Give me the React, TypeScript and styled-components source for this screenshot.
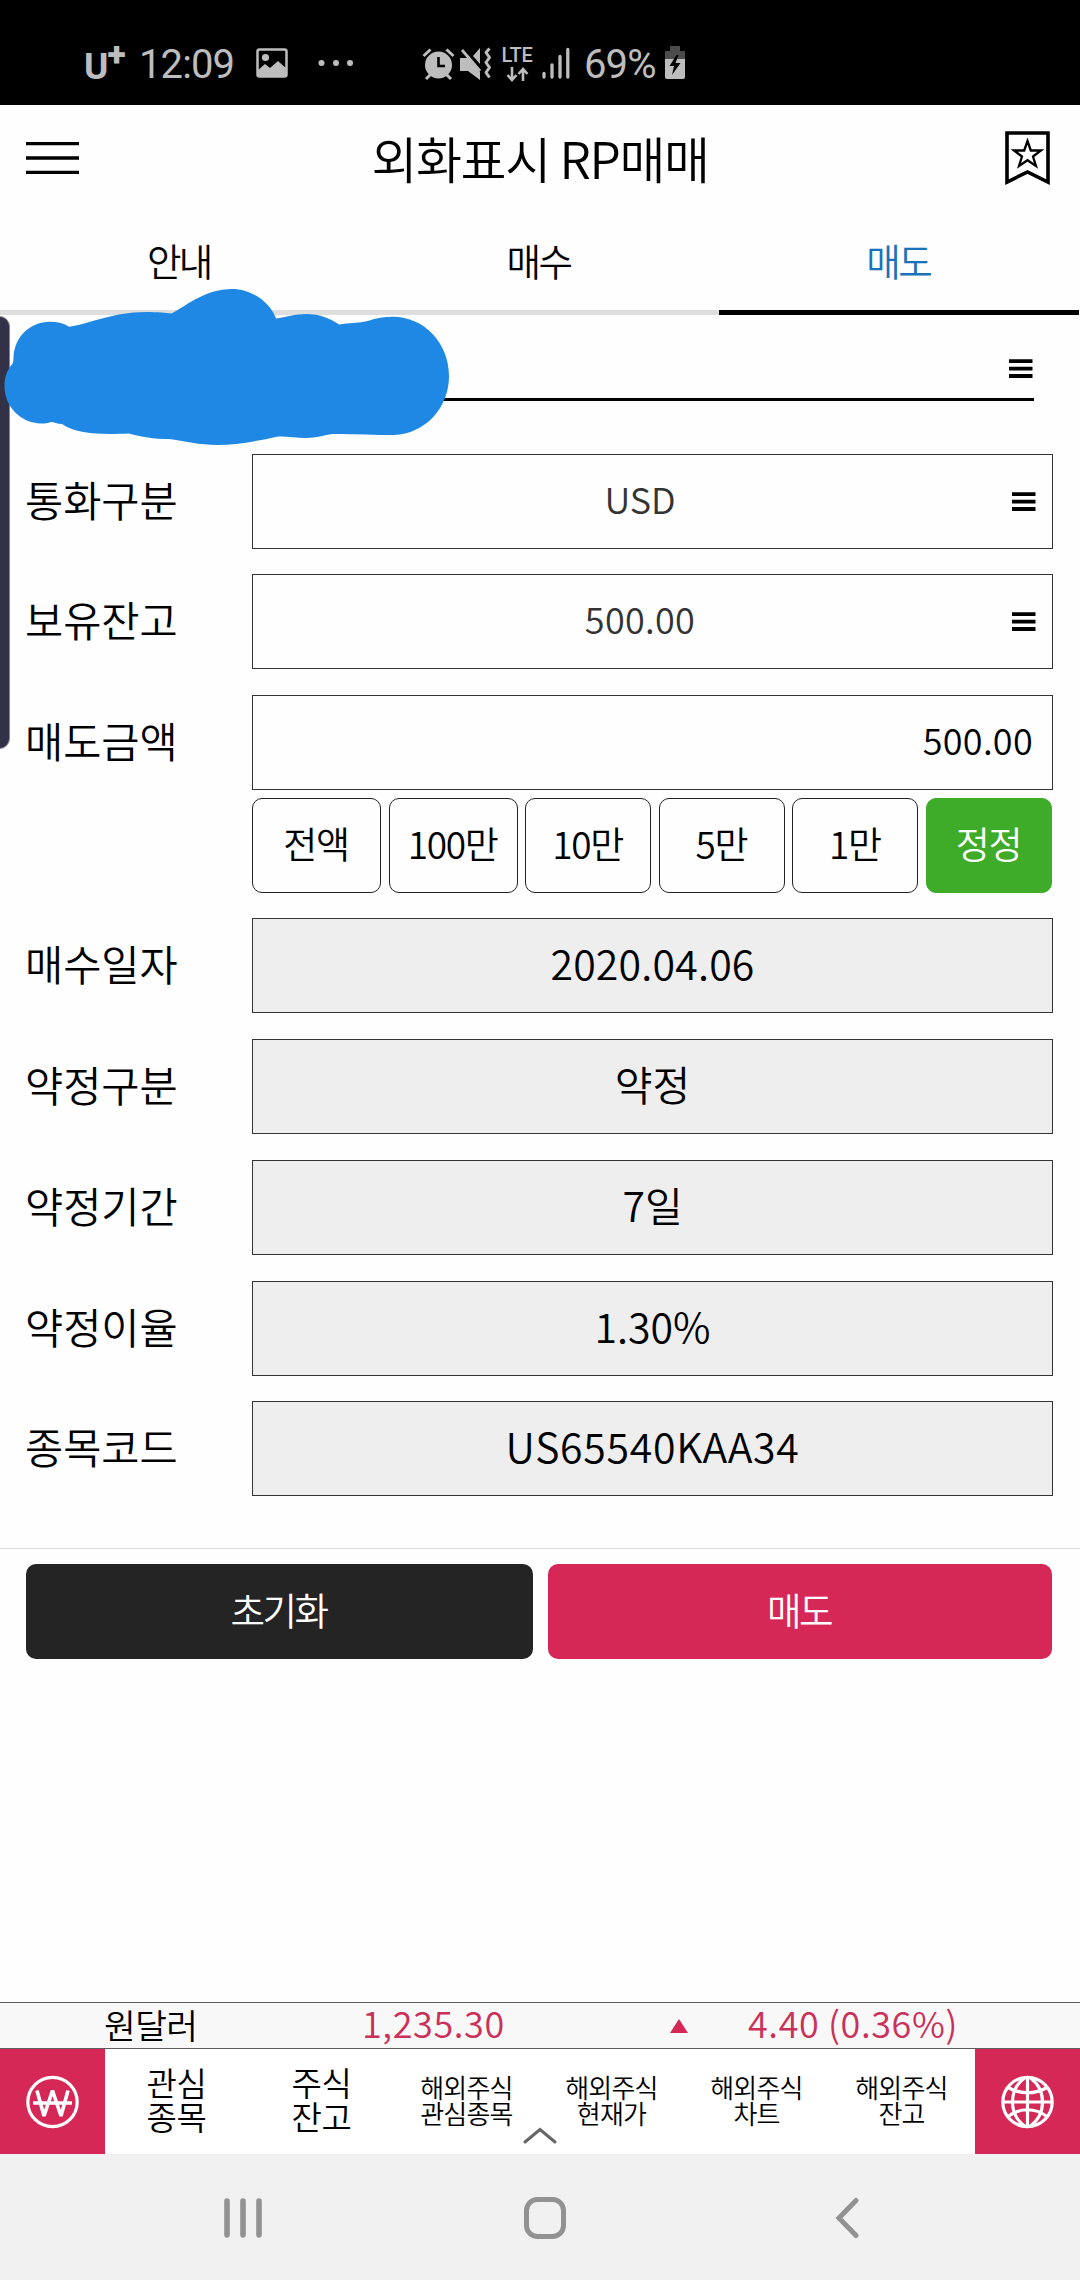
import React from 'react';
import styled, { createGlobalStyle } from 'styled-components';

const PINK = '#d52857';
const SYS = '#bdbdbd';

const GlobalStyle = createGlobalStyle`
  * { box-sizing: border-box; }
  body {
    margin: 0;
    background: #fefefe;
    color: #000;
    font-family: "Noto Sans CJK KR", "Noto Sans", sans-serif;
    font-weight: 350;
  }
  button { font: inherit; color: inherit; background: none; border: 0; padding: 0; margin: 0; }
  svg { display: block; flex: none; }
`;

const Screen = styled.div`
  position: relative;
  width: 1080px;
  height: 2280px;
  display: flex;
  flex-direction: column;
  overflow: hidden;
`;

const StatusBar = styled.header`
  height: 105px;
  flex: none;
  background: #000;
  color: ${SYS};
  display: flex;
  align-items: flex-start;
  padding: 43px 0 0 84px;
  font-family: Roboto, sans-serif;
  font-weight: 400;
  white-space: nowrap;
`;

const Slot = styled.div<{ $w: number; $ml?: number; $pt?: number }>`
  width: ${p => p.$w}px;
  height: 40px;
  margin-left: ${p => p.$ml ?? 0}px;
  padding-top: ${p => p.$pt ?? 0}px;
  flex: none;
`;

const StatusText = styled(Slot)`
  font-size: 40px;
  line-height: 43px;
  letter-spacing: -0.9px;
`;

const Carrier = styled(Slot)`
  display: flex;
  align-items: flex-start;
  font-size: 37px;
  font-weight: 700;
  line-height: 47px;
  b { font-size: 34px; line-height: 22px; margin-left: -1px; }
`;

const Lte = styled(Slot)`
  display: flex;
  flex-direction: column;
  align-items: center;
  font-size: 20px;
  font-weight: 500;
  line-height: 24px;
  letter-spacing: -0.3px;
`;

const TitleBar = styled.div`
  height: 106px;
  flex: none;
  display: flex;
  align-items: center;
  justify-content: space-between;
  padding: 0 29px 0 26px;
`;

const Title = styled.h1`
  margin: 0;
  font-size: 50px;
  font-weight: inherit;
  line-height: 60px;
  letter-spacing: -1.4px;
  padding: 0 4px 2px 0;
`;

const Tabs = styled.nav`
  height: 104px;
  flex: none;
  display: flex;
  padding-right: 1px;
`;

const Tab = styled.button<{ $active?: boolean }>`
  flex: 1;
  font-size: 37.5px;
  line-height: 90px;
  letter-spacing: -2.6px;
  padding: 0 2px 2px 0;
  color: ${p => (p.$active ? '#1a72b8' : '#000')};
  border-bottom: 5px solid ${p => (p.$active ? '#000' : '#dedede')};
`;

const AccountRow = styled.div`
  height: 86px;
  flex: none;
  margin: 0 46px 0 26px;
  border-bottom: 3px solid #000;
  display: flex;
  align-items: center;
  justify-content: flex-end;
  padding: 24px 1px 0 0;
`;

const Form = styled.div`
  display: flex;
  flex-direction: column;
  padding: 53px 27px 0 26px;
`;

const Row = styled.div<{ $gap?: number }>`
  display: flex;
  align-items: center;
  height: 95px;
  margin-top: ${p => p.$gap ?? 0}px;
`;

const Label = styled.label`
  width: 226px;
  flex: none;
  font-size: 41.5px;
  line-height: 88px;
  padding-bottom: 6px;
  text-indent: -1px;
`;

const Field = styled.div<{ $kind: 'select' | 'input' | 'readonly' }>`
  flex: 1;
  height: 95px;
  border: 1px solid #333;
  display: flex;
  align-items: center;
  background: ${p => (p.$kind === 'readonly' ? '#eee' : '#fefefe')};
  color: ${p => (p.$kind === 'select' ? '#333' : '#000')};
  font-size: ${p => (p.$kind === 'readonly' ? 41 : 36)}px;
  padding: ${p => (p.$kind === 'select' ? '1px 16px 0 15px' : p.$kind === 'input' ? '0 19px 0 0' : '0')};
`;

const Value = styled.span<{ $align: 'center' | 'right'; $track?: number }>`
  flex: 1;
  line-height: 80px;
  padding-bottom: 8px;
  text-align: ${p => p.$align};
  letter-spacing: ${p => p.$track ?? 0}px;
`;

const QuickRow = styled.div`
  display: grid;
  grid-template-columns: 129px 129px 126px 126px 126px 126px;
  justify-content: space-between;
  margin: 8px 1px 0 226px;
  height: 95px;
`;

const Quick = styled.button<{ $green?: boolean }>`
  border-radius: 10px;
  border: 1px solid ${p => (p.$green ? '#3eab29' : '#222')};
  background: ${p => (p.$green ? '#3eab29' : '#fefefe')};
  color: ${p => (p.$green ? '#fff' : '#000')};
  font-size: 37px;
  line-height: 80px;
  letter-spacing: -1.3px;
  padding: 0 1px 6px 0;
  white-space: nowrap;
`;

const Actions = styled.div`
  margin-top: 52px;
  border-top: 1px solid #dcdcdc;
  padding: 15px 28px 0 26px;
  display: grid;
  grid-template-columns: 507px 504px;
  justify-content: space-between;
`;

const Action = styled.button<{ $color: string }>`
  height: 95px;
  border-radius: 10px;
  background: ${p => p.$color};
  color: #fff;
  font-size: 37.5px;
  line-height: 80px;
  letter-spacing: -2.5px;
  padding: 0 2px 5px 0;
`;

const Spacer = styled.div`
  flex: 1;
`;

const Ticker = styled.div`
  height: 47px;
  flex: none;
  border: solid #5c5c5c;
  border-width: 1px 0;
  background: #f8f8f8;
  display: grid;
  grid-template-columns: 104px 258px 308px 78px 1fr;
  align-items: center;
  font-size: 36px;
  line-height: 38px;
  letter-spacing: 0.6px;
  color: #c9305a;
  white-space: nowrap;
`;

const Quote = styled.span`
  padding-bottom: 7px;
`;

const Pair = styled.span`
  color: #000;
  font-size: 34.5px;
  letter-spacing: -0.6px;
  padding-bottom: 4px;
`;

const BottomBar = styled.nav`
  position: relative;
  height: 105px;
  flex: none;
  display: grid;
  grid-template-columns: 105px repeat(6, 1fr) 105px;
  background: #fff;
`;

const Market = styled.button`
  background: ${PINK};
  display: flex;
  align-items: center;
  justify-content: center;
`;

const Shortcut = styled.button<{ $small?: boolean }>`
  display: flex;
  flex-direction: column;
  align-items: center;
  justify-content: center;
  padding-right: 2px;
  font-family: "Liberation Sans", "Noto Sans CJK KR", sans-serif;
  font-size: ${p => (p.$small ? 26 : 33)}px;
  line-height: ${p => (p.$small ? 26 : 34)}px;
  letter-spacing: ${p => (p.$small ? -0.8 : -0.3)}px;
`;

const Pull = styled.div`
  position: absolute;
  left: 522px;
  top: 77px;
`;

const SystemNav = styled.div`
  height: 126px;
  flex: none;
  background: #f1f1f1;
  display: grid;
  grid-template-columns: 300px 299px auto;
  align-items: center;
  padding: 2px 0 0 223px;
`;

const EdgeHandle = styled.div`
  position: absolute;
  left: -11px;
  top: 316px;
  width: 21px;
  height: 433px;
  border-radius: 11px;
  border: 1px solid #85838f;
  background: #333147;
`;

const Scribble = styled.svg`
  position: absolute;
  left: 0;
  top: 280px;
`;

const ListIcon = () => (
  <svg width="24" height="20" viewBox="0 0 24 20">
    <path d="M0 2.2h23.5M0 9.6h23.5M0 17h23.5" stroke="#000" strokeWidth="3.8" />
  </svg>
);

const MenuIcon = () => (
  <svg width="53" height="34" viewBox="0 0 53 34">
    <path d="M0 2.600h53M0 17h53M0 31.400h53" stroke="#000" strokeWidth="3.4" />
  </svg>
);

const BookmarkIcon = () => (
  <svg width="46" height="54" viewBox="0 0 46 54" fill="none" stroke="#000">
    <path d="M2 2h41v49L22.5 41 2 51z" strokeWidth="3.6" />
    <path d="M22.500 10l3.300 9.500h10.200l-8 6 3 9.500-8.500-5.800-8.500 5.800 3-9.500-8-6h10.200z" strokeWidth="2.300" />
  </svg>
);

const PictureIcon = () => (
  <svg width="32" height="32" viewBox="0 0 32 32">
    <rect x="1.5" y="2.5" width="29" height="27" rx="2" fill="none" stroke={SYS} strokeWidth="2.5" />
    <circle cx="9.5" cy="10.5" r="3.6" fill={SYS} />
    <path d="M1 24l8-7 5 4 8-7 9 8v8H1z" fill={SYS} />
  </svg>
);

const DotsIcon = () => (
  <svg width="36" height="8" viewBox="0 0 36 8" fill={SYS}>
    <circle cx="3.5" cy="4" r="3" />
    <circle cx="18" cy="4" r="3" />
    <circle cx="32" cy="4" r="3" />
  </svg>
);

const AlarmIcon = () => (
  <svg width="33" height="34" viewBox="0 0 33 34" fill="none" stroke={SYS}>
    <circle cx="16.5" cy="18" r="13.5" fill={SYS} stroke="none" />
    <path d="M1.5 9l7-6.5M31.5 9l-7-6.5M4 32l5-5M29 32l-5-5" strokeWidth="3" />
    <path d="M16.5 10v9H23" stroke="#000" strokeWidth="2.6" />
  </svg>
);

const MuteIcon = () => (
  <svg width="32" height="34" viewBox="0 0 32 34">
    <path d="M0 11h8l12 14v8L8 24H0zM13 9l7-8v16z" fill={SYS} />
    <path d="M2 3l18 21" stroke={SYS} strokeWidth="2.800" />
    <path d="M29.500 1.500l-3.500 4 3.500 5-3.500 5 3.500 5-3.500 5 3.500 5" fill="none" stroke={SYS} strokeWidth="3" strokeLinejoin="round" />
  </svg>
);

const DataIcon = () => (
  <svg width="23" height="15" viewBox="0 0 23 15" fill="none" stroke={SYS} strokeWidth="2.6">
    <path d="M6 0v12M1.5 8L6 13l4.500-5M17 14V3M12.500 7L17 2l4.500 5" />
  </svg>
);

const SignalIcon = () => (
  <svg width="28" height="33" viewBox="0 0 28 33" stroke={SYS} strokeWidth="3.3" strokeLinecap="round">
    <path d="M2 26.500V30M10 18v12M18 9.500V30M25.800 2.500V30" />
  </svg>
);

const BatteryIcon = () => (
  <svg width="22" height="34" viewBox="0 0 22 34">
    <path d="M6 0h10v5h5v9H1V5h5z" fill="#4b4b4b" />
    <path d="M1 13h20v18a2 2 0 0 1-2 2H3a2 2 0 0 1-2-2z" fill={SYS} />
    <path d="M12.500 9L5.500 20h4.500l-2 9 8.500-12h-5l3-8z" fill="#000" />
  </svg>
);

const WonIcon = () => (
  <svg width="54" height="54" viewBox="0 0 54 54" fill="none" stroke="#fff">
    <circle cx="26.500" cy="27" r="24.700" strokeWidth="3.200" />
    <path d="M11 15.500l7 25.500 8.500-25.500L35 41l7-25.500M7 28h39" strokeWidth="3.600" strokeLinejoin="bevel" />
  </svg>
);

const GlobeIcon = () => (
  <svg width="54" height="54" viewBox="0 0 54 54" fill="none" stroke="#fff" strokeWidth="3.200">
    <circle cx="26.500" cy="27" r="24.700" />
    <path d="M26.500 2v50M2 27h50M23.500 3C7.500 15 7.500 39 23.500 51M29.500 3c16 12 16 36 0 48M7 12.500c12 7 27 7 39 0M7 41.500c12-9 27-9 39 0" />
  </svg>
);

const shortcuts: { lines: string[]; small?: boolean }[] = [
  { lines: ['관심', '종목'] },
  { lines: ['주식', '잔고'] },
  { lines: ['해외주식', '관심종목'], small: true },
  { lines: ['해외주식', '현재가'], small: true },
  { lines: ['해외주식', '차트'], small: true },
  { lines: ['해외주식', '잔고'], small: true },
];

const details = [
  { label: '매수일자', value: '2020.04.06', gap: 25, track: 0.2 },
  { label: '약정구분', value: '약정', gap: 26 },
  { label: '약정기간', value: '7일', gap: 26 },
  { label: '약정이율', value: '1.30%', gap: 26 },
  { label: '종목코드', value: 'US65540KAA34', gap: 25, track: 0.7 },
];

const amounts = ['전액', '100만', '10만', '5만', '1만'];

export default function App() {
  return (
    <Screen>
      <GlobalStyle />
      <StatusBar>
        <Carrier $w={42}>U<b>+</b></Carrier>
        <StatusText $w={100} $ml={13}>12:09</StatusText>
        <Slot $w={32} $ml={17} $pt={4}><PictureIcon /></Slot>
        <Slot $w={36} $ml={30} $pt={16}><DotsIcon /></Slot>
        <Slot $w={33} $ml={68} $pt={4}><AlarmIcon /></Slot>
        <Slot $w={32} $ml={5} $pt={4}><MuteIcon /></Slot>
        <Lte $w={32} $ml={9}>LTE<DataIcon /></Lte>
        <Slot $w={28} $ml={9} $pt={4}><SignalIcon /></Slot>
        <StatusText $w={72} $ml={14}>69%</StatusText>
        <Slot $w={22} $ml={8} $pt={3}><BatteryIcon /></Slot>
      </StatusBar>

      <TitleBar>
        <MenuIcon />
        <Title>외화표시 RP매매</Title>
        <BookmarkIcon />
      </TitleBar>

      <Tabs>
        <Tab>안내</Tab>
        <Tab>매수</Tab>
        <Tab $active>매도</Tab>
      </Tabs>

      <AccountRow><ListIcon /></AccountRow>

      <Form>
        <Row>
          <Label>통화구분</Label>
          <Field $kind="select"><Value $align="center">USD</Value><ListIcon /></Field>
        </Row>
        <Row $gap={25}>
          <Label>보유잔고</Label>
          <Field $kind="select"><Value $align="center" $track={0.3}>500.00</Value><ListIcon /></Field>
        </Row>
        <Row $gap={26}>
          <Label>매도금액</Label>
          <Field $kind="input"><Value $align="right" $track={0.3}>500.00</Value></Field>
        </Row>
        <QuickRow>
          {amounts.map(a => <Quick key={a}>{a}</Quick>)}
          <Quick $green>정정</Quick>
        </QuickRow>
        {details.map(d => (
          <Row key={d.label} $gap={d.gap}>
            <Label>{d.label}</Label>
            <Field $kind="readonly"><Value $align="center" $track={d.track}>{d.value}</Value></Field>
          </Row>
        ))}
      </Form>

      <Actions>
        <Action $color="#242424">초기화</Action>
        <Action $color={PINK}>매도</Action>
      </Actions>

      <Spacer />

      <Ticker>
        <i />
        <Pair>원달러</Pair>
        <Quote>1,235.30</Quote>
        <svg width="18" height="14" viewBox="0 0 18 14"><path d="M9 0l9 14H0z" fill={PINK} /></svg>
        <Quote>4.40 (0.36%)</Quote>
      </Ticker>

      <BottomBar>
        <Market><WonIcon /></Market>
        {shortcuts.map((s, i) => (
          <Shortcut key={i} $small={s.small}>
            {s.lines.map(l => <span key={l}>{l}</span>)}
          </Shortcut>
        ))}
        <Market><GlobeIcon /></Market>
        <Pull>
          <svg width="36" height="20" viewBox="0 0 36 20" fill="none" stroke="#666" strokeWidth="3" strokeLinecap="round">
            <path d="M3 16L18 3.500 33 16" />
          </svg>
        </Pull>
      </BottomBar>

      <SystemNav>
        <svg width="40" height="42" viewBox="0 0 40 42" stroke="#929292" strokeWidth="5.600" strokeLinecap="round">
          <path d="M4 4v34M20 4v34M36 4v34" />
        </svg>
        <svg width="44" height="44" viewBox="0 0 44 44" fill="none" stroke="#929292" strokeWidth="5">
          <rect x="3.500" y="3.500" width="37" height="37" rx="11" />
        </svg>
        <svg width="42" height="42" viewBox="-13 0 42 42" fill="none" stroke="#929292" strokeWidth="5" strokeLinecap="round">
          <path d="M21 3.500L4 21l17 17.500" />
        </svg>
      </SystemNav>

      <EdgeHandle />
      <Scribble width="460" height="170" viewBox="0 0 460 170">
        <path
          fill="#1f88e5"
          d="M13.500 78C14 57 30 41.700 50 41.700C58 41.700 64 43.500 69 46.700C86 45 112 32 146 32C158 32 166 33 171.500 33.500C189 24 206 9 232 9C253 9 271 24 276 38.500C286 37 295 34 306 34C320 34 331 39 339 44.500C349 43 359 43 368 41C376 38 384 36.700 393 36.700C424 36.700 449 63 449 96C449 128 425 154 394 155C372 155 350 153.500 332 154C325 155 316 158 306 158C295 158 286 156 277 156.700C257 161 236 165 217 165C200 165 184 161 169 159C154 159 141 157 129 153.500C110 154 78 156 62 144C57 144 54 142 51 142C48 143 45 143.500 41 143.500C21 143 4.500 127 4.500 106C4.500 95 8 89 13 83Z"
        />
      </Scribble>
    </Screen>
  );
}
